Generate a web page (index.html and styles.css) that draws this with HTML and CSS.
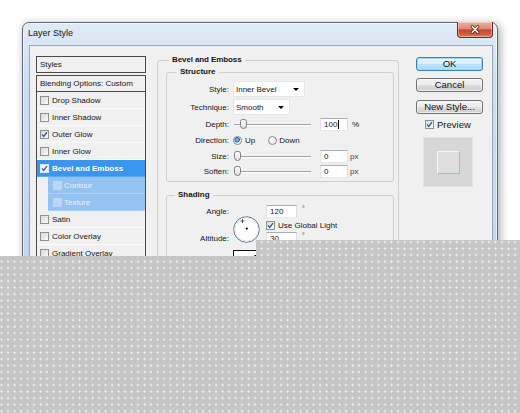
FILE: index.html
```html
<!DOCTYPE html>
<html lang="en">
<head>
  <meta charset="UTF-8" />
  <title>Layer Style</title>
  <link rel="stylesheet" href="styles.css">
</head>
<body>

  <!-- Dialog window -->
  <div class="window">
    <div class="titlebar">
      <span class="title">Layer Style</span>
      <div class="close">
        <svg viewBox="0 0 10 9" width="10" height="9">
          <path d="M2.2 1.6l5.6 5.8M7.8 1.6l-5.6 5.8" stroke="#5b2114" stroke-width="3" stroke-linecap="round"/>
          <path d="M2.2 1.6l5.6 5.8M7.8 1.6l-5.6 5.8" stroke="#fff" stroke-width="1.5" stroke-linecap="round"/>
        </svg>
      </div>
    </div>

    <div class="client">
      <!-- Styles list -->
      <div class="styles-panel">
        <div class="styles-head">Styles</div>
        <ul class="style-list">
          <li class="blend">Blending Options: Custom</li>
          <li><span class="cb"></span>Drop Shadow</li>
          <li><span class="cb"></span>Inner Shadow</li>
          <li><span class="cb on"><svg viewBox="0 0 7 7"><path d="M1 3.4l1.8 2.1L6 1.2"/></svg></span>Outer Glow</li>
          <li><span class="cb"></span>Inner Glow</li>
          <li class="active"><span class="cb on"><svg viewBox="0 0 7 7"><path d="M1 3.4l1.8 2.1L6 1.2"/></svg></span>Bevel and Emboss</li>
          <li class="sub"><span class="cb"></span>Contour</li>
          <li class="sub"><span class="cb"></span>Texture</li>
          <li><span class="cb"></span>Satin</li>
          <li><span class="cb"></span>Color Overlay</li>
          <li><span class="cb"></span>Gradient Overlay</li>
          <li><span class="cb"></span>Pattern Overlay</li>
          <li><span class="cb"></span>Stroke</li>
        </ul>
      </div>

      <!-- Bevel and Emboss settings -->
      <fieldset class="group main-group">
        <legend>Bevel and Emboss</legend>

        <fieldset class="group sub-group">
          <legend>Structure</legend>
          <div class="row tall">
            <label>Style:</label>
            <div class="select w72"><span>Inner Bevel</span><i class="arrow"></i></div>
          </div>
          <div class="row tall">
            <label>Technique:</label>
            <div class="select w57"><span>Smooth</span><i class="arrow"></i></div>
          </div>
          <div class="row">
            <label>Depth:</label>
            <div class="ctl">
              <div class="slider"><span class="thumb depth"></span></div>
              <span class="field">100<i class="text-caret"></i></span><span class="unit">%</span>
            </div>
          </div>
          <div class="row dir">
            <label>Direction:</label>
            <div class="ctl">
              <span class="radio on"></span><span class="opt">Up</span>
              <span class="radio down"></span><span class="opt">Down</span>
            </div>
          </div>
          <div class="row short">
            <label>Size:</label>
            <div class="ctl">
              <div class="slider"><span class="thumb"></span></div>
              <span class="field">0</span><span class="unit px">px</span>
            </div>
          </div>
          <div class="row">
            <label>Soften:</label>
            <div class="ctl">
              <div class="slider"><span class="thumb"></span></div>
              <span class="field">0</span><span class="unit px">px</span>
            </div>
          </div>
        </fieldset>

        <fieldset class="group sub-group shading">
          <legend>Shading</legend>
          <div class="shade-grid">
            <label class="l-angle">Angle:</label>
            <svg class="dial" viewBox="0 0 27 27" width="27" height="27">
              <circle cx="13.5" cy="13.5" r="12.8" fill="#fdfdfd" stroke="#67768b" stroke-width="1"/>
              <circle cx="13.5" cy="13.5" r="11.6" fill="none" stroke="#dfe6ee" stroke-width="1"/>
              <path d="M9.5 3v4M7.5 5h4" stroke="#333" stroke-width="0.8"/>
              <circle cx="13.8" cy="12.6" r="1.1" fill="#000"/>
            </svg>
            <div class="c-angle"><span class="field w31">120</span><span class="deg">°</span></div>
            <div class="c-global">
              <span class="cb on"><svg viewBox="0 0 7 7"><path d="M1 3.4l1.8 2.1L6 1.2"/></svg></span>Use Global Light
            </div>
            <label class="l-alt">Altitude:</label>
            <div class="c-alt"><span class="field w31">30</span><span class="deg">°</span></div>
            <label class="l-gloss">Gloss Contour:</label>
            <div class="gloss"><i class="arrow"></i></div>
          </div>
        </fieldset>
      </fieldset>

      <!-- Dialog buttons and preview -->
      <div class="actions">
        <div class="btn default">OK</div>
        <div class="btn cancel">Cancel</div>
        <div class="btn new-style">New Style...</div>
        <div class="preview-check">
          <span class="cb on"><svg viewBox="0 0 7 7"><path d="M1 3.4l1.8 2.1L6 1.2"/></svg></span>Preview
        </div>
        <div class="thumb-box"><div class="thumb-swatch"></div></div>
      </div>
    </div>
  </div>

  <!-- Grey backdrop laid over the lower part -->
  <div class="backdrop"></div>

</body>
</html>
```

FILE: styles.css
```css
* { box-sizing: border-box; }
body {
  margin: 0;
  width: 520px;
  height: 413px;
  overflow: hidden;
  position: relative;
  background: #fff;
  font-family: "Liberation Sans", Arial, sans-serif;
  font-size: 8px;
  color: #151515;
}

/* ===== Window frame ===== */
.window {
  margin: 22px 0 0 22px;
  width: 476px;
  height: 400px;
  border: 1px solid #5d6a7b;
  border-radius: 7px 7px 0 0;
  padding: 0 4px 0 6px;
  background: linear-gradient(#dfeaf6, #cddef1 60px, #b7cfeb);
  box-shadow: 2px 2px 10px rgba(0,0,0,0.35), inset 0 0 0 1px rgba(255,255,255,0.55);
  display: flex;
  flex-direction: column;
}
.titlebar { height: 22px; display: flex; justify-content: space-between; align-items: flex-start; }
.title { margin: 5px 0 0 -1px; font-size: 9px; line-height: 11px; color: #111; }
.close {
  margin-top: -1px;
  width: 36px;
  height: 16px;
  border: 1px solid #6e2a1c;
  border-top: none;
  border-radius: 0 0 4px 4px;
  background: linear-gradient(#eab1a3, #dc8a74 45%, #c4492f 52%, #d0603f 85%, #e08a62);
  box-shadow: inset 0 0 0 1px rgba(255,255,255,0.35);
  display: flex;
  align-items: center;
  justify-content: center;
}
.close svg { display: block; }

/* ===== Client area ===== */
.client {
  flex: 1;
  background: #f0f0f0;
  border: 1px solid #97a6b9;
  display: flex;
  align-items: flex-start;
  padding: 10px 0 0 6px;
}

/* ===== Styles list ===== */
.styles-panel { width: 110px; flex-shrink: 0; }
.styles-head {
  height: 17px;
  border: 1px solid #4a4a4a;
  padding-left: 3px;
  line-height: 15px;
  margin-bottom: 2px;
}
.style-list { list-style: none; margin: 0; padding: 0; border: 1px solid #4a4a4a; border-bottom: none; }
.style-list li {
  height: 17px;
  border-bottom: 1px solid #fbfbfb;
  display: flex;
  align-items: center;
  gap: 3px;
  padding-left: 3px;
  white-space: nowrap;
}
.style-list li.blend { height: 16px; border-bottom: 1px solid #4a4a4a; }
.style-list li.active { background: #3a95ee; color: #fff; font-weight: bold; border-bottom-color: #5aa8f2; }
.style-list li.sub {
  margin-left: 11px;
  padding-left: 5px;
  gap: 2px;
  background: #95c3f1;
  color: #e8f2fc;
  border-bottom-color: #aad0f5;
}
.style-list li.sub .cb { border-color: #bcd6f1; background: rgba(255,255,255,0.35); }

/* ===== Checkboxes & radios ===== */
.cb {
  width: 9px;
  height: 9px;
  flex-shrink: 0;
  border: 1px solid #8e8f8f;
  background: linear-gradient(135deg, #d8d8d8, #fbfbfb);
  display: inline-block;
}
.cb svg { display: block; width: 7px; height: 7px; }
.cb svg path { fill: none; stroke: #34559a; stroke-width: 1.3; }
.active .cb { border-color: #d9e9fb; background: #f4f8fd; }

.radio {
  width: 9px;
  height: 9px;
  border-radius: 50%;
  border: 1px solid #8b8b8b;
  background: radial-gradient(circle at 40% 40%, #fff, #dcdcdc);
  display: inline-block;
}
.radio.on { background: radial-gradient(circle at 45% 40%, #8fd3f8 0, #2a74b6 2.4px, #e4e4e4 3px, #fff 4px); }
.radio.down { margin-left: 13px; }
.opt { margin-left: 3px; }
.radio.down + .opt { margin-left: 2px; }

/* ===== Group boxes ===== */
.group {
  margin: 0;
  min-width: 0;
  border: 1px solid #d0d0d0;
  border-radius: 3px;
}
.group legend { font-weight: bold; line-height: 10px; padding: 0 3px; }
.main-group { width: 242px; margin: -1px 0 0 11px; padding: 0 4px 0 8px; }
.main-group > legend { margin-left: 3px; letter-spacing: -0.1px; }
.sub-group { margin-top: 2px; padding: 3px 0 2px 8px; }
.sub-group > legend { margin-left: 2px; }
.shading { margin-top: 8px; height: 120px; }
.shading > legend { margin-left: 0; }

/* ===== Structure rows ===== */
.row { display: grid; grid-template-columns: 54px 1fr; column-gap: 4px; align-items: center; height: 16px; }
.row.tall { height: 18px; }
.row.dir { height: 17px; }
.row.short { height: 14px; }
.row label, .shade-grid label { text-align: right; white-space: nowrap; }
.ctl { display: flex; align-items: center; }

.select {
  height: 16px;
  background: #fff;
  border: 1px solid #e6e6e6;
  display: flex;
  align-items: center;
  justify-content: space-between;
  padding: 0 5px 0 2px;
}
.select.w72 { width: 72px; }
.select.w57 { width: 57px; }
.arrow {
  width: 0;
  height: 0;
  border-left: 3px solid transparent;
  border-right: 3px solid transparent;
  border-top: 3px solid #000;
}

.slider { position: relative; width: 77px; height: 11px; margin-left: 1px; }
.slider::before {
  content: "";
  position: absolute;
  left: 0;
  right: 0;
  top: 5px;
  height: 1px;
  background: #a2a2a2;
  box-shadow: 0 1px 0 #fff;
}
.thumb {
  position: absolute;
  top: 0;
  left: 0;
  width: 7px;
  height: 10px;
  border: 1px solid #7c7c7c;
  border-radius: 3px 3px 4px 4px;
  background: linear-gradient(#fefefe, #dedede);
}
.thumb.depth { left: 6px; }

.field {
  width: 28px;
  height: 13px;
  margin-left: 9px;
  background: #fff;
  border: 1px solid;
  border-color: #abadb3 #dbdfe6 #e3e9ef #e2e3ea;
  padding-left: 3px;
  line-height: 11px;
  display: inline-flex;
  align-items: center;
}
.field.w31 { width: 31px; margin-left: 0; }
.text-caret { width: 1px; height: 9px; background: #000; margin-left: 1px; }
.unit { margin-left: 4px; }
.unit.px { margin-left: 2px; color: #444; }

/* ===== Shading ===== */
.shade-grid {
  display: grid;
  grid-template-columns: 54px 29px auto;
  grid-template-rows: 16px 12px 15px 30px;
  column-gap: 4px;
  align-items: center;
}
.l-angle { grid-row: 1; grid-column: 1; }
.dial { grid-row: 1 / 4; grid-column: 2; align-self: start; margin-top: 13px; display: block; }
.c-angle { grid-row: 1; grid-column: 3; display: flex; align-items: flex-start; }
.c-global { grid-row: 2; grid-column: 3; display: flex; align-items: center; gap: 3px; }
.l-alt { grid-row: 3; grid-column: 1; }
.c-alt { grid-row: 3; grid-column: 3; display: flex; align-items: flex-start; }
.l-gloss { grid-row: 4; grid-column: 1; }
.gloss {
  grid-row: 4;
  grid-column: 2 / 4;
  align-self: start;
  margin-top: 4px;
  width: 40px;
  height: 28px;
  border: 1px solid #111;
  background: #fff;
  display: flex;
  justify-content: flex-end;
  padding: 4px 12px 0 0;
}
.deg { margin-left: 5px; line-height: 8px; font-size: 7px; color: #444; }

/* ===== Buttons & preview ===== */
.actions { width: 67px; margin: 1px 0 0 17px; display: flex; flex-direction: column; }
.btn {
  height: 14px;
  border: 1px solid #707070;
  border-radius: 3px;
  background: linear-gradient(#f3f3f3, #ebebeb 50%, #dddddd 51%, #cfcfcf);
  box-shadow: inset 0 0 0 1px rgba(255,255,255,0.6);
  font-size: 9.5px;
  line-height: 12px;
  text-align: center;
  color: #111;
}
.btn.default {
  border-color: #3c7fb1;
  background: linear-gradient(#eaf6fd, #d9f0fc 50%, #bee6fd 51%, #a7d9f5);
  box-shadow: inset 0 0 0 1px #9edcf6;
}
.btn.cancel { margin-top: 7px; }
.btn.new-style { margin-top: 8px; }
.preview-check {
  margin-top: 3px;
  height: 14px;
  padding-left: 9px;
  display: flex;
  align-items: center;
  gap: 3px;
  font-size: 9.5px;
}
.thumb-box {
  margin: 6px 0 0 7px;
  width: 50px;
  height: 50px;
  background: #d7d7d7;
  border: 1px solid #e2e2e2;
  display: flex;
  align-items: center;
  justify-content: center;
}
.thumb-swatch {
  width: 23px;
  height: 23px;
  background: #dedede;
  border: 1px solid;
  border-color: #f5f5f5 #a9b8cd #a9b8cd #f5f5f5;
}

/* ===== Backdrop ===== */
.backdrop {
  position: absolute;
  inset: 0;
  clip-path: polygon(256px 240px, 520px 240px, 520px 413px, 0 413px, 0 256px, 256px 256px);
  background:
    radial-gradient(circle at 1.5px 1.5px, #f2f2f2 0.8px, transparent 1.3px) 0 0 / 6.5px 6.5px,
    #c6c6c6;
}
```
